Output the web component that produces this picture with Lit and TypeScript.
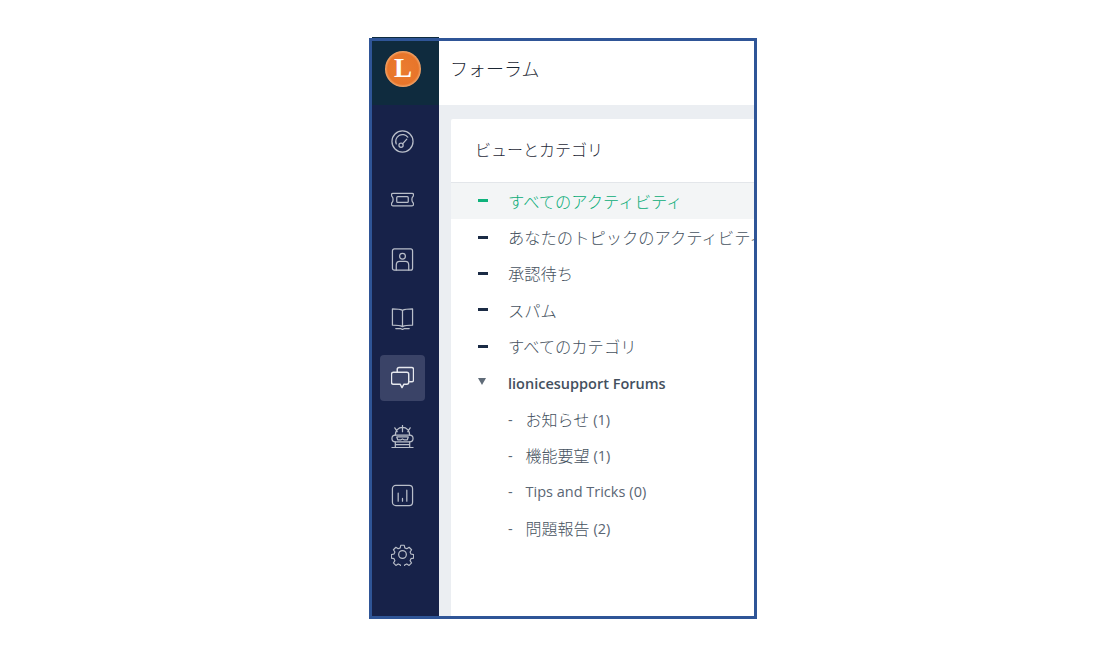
import { LitElement, css, html, svg } from 'lit';
import { customElement } from 'lit/decorators.js';

const ICONS = [
  svg`<circle cx="12" cy="12" r="11"/><path d="M5.500 14.500A7 7 0 0 1 17.500 7.500"/><circle cx="10.500" cy="16" r="2.200"/><path d="M12 14.500l4.500-5"/>`,
  svg`<path d="M2 4.500h20c.8 0 1.500.6 1.500 1.400 0 1.100-.4 2-1 2.500-.9.9-.9 4.300 0 5.200.6.500 1 1.400 1 2.500 0 .8-.7 1.400-1.500 1.400H2c-.8 0-1.500-.6-1.500-1.400 0-1.100.4-2 1-2.500.9-.9.9-4.300 0-5.200-.6-.5-1-1.400-1-2.500 0-.8.7-1.400 1.500-1.400z"/><rect x="6" y="8" width="12" height="6" rx="1"/>`,
  svg`<rect x="1.500" y="1" width="21" height="22" rx="2"/><circle cx="12" cy="8.500" r="3"/><path d="M5.500 23v-5c0-2.500 1.500-4 3.500-4h6c2 0 3.500 1.500 3.500 4v5"/>`,
  svg`<path d="M12 3.500C10 2.500 7 2 1.500 2v17c5.500 0 8.500.5 10.500 1.500 2-1 5-1.500 10.500-1.500V2C17 2 14 2.500 12 3.500zM12 3.500v17M5 22.500h5l2 1 2-1h5"/>`,
  svg`<path d="M6.500 6.500V3.500C6.500 2.400 7.400 1.500 8.500 1.500h13c1.100 0 2 .9 2 2v11c0 1.100-.9 2-2 2h-2"/><path d="M2.500 6.500h14c1.100 0 2 .9 2 2v8.500c0 1.100-.9 2-2 2h-3l-2 3.500-2-3.500h-7c-1.100 0-2-.9-2-2V8.500c0-1.100.9-2 2-2z"/>`,
  svg`<path d="M4.500 10.500C4.500 6 7.500 2.500 12 2.500s7.500 3.500 7.500 8M12 .5V7M4 3l2.500 4M20 3l-2.500 4"/><path d="M1 14c0-2 1.300-3.500 3.500-3.500h15c2.200 0 3.500 1.500 3.500 3.500s-1.300 3.500-3.500 3.500h-15C2.300 17.500 1 16 1 14z"/><path d="M6 12.500h12l-1 3h-3.500l-1.500-1-1.500 1H7zM4.500 17.500V23M19.500 17.500V23M1 23.500h22M4.500 20.500h15"/>`,
  svg`<rect x="1.500" y="1.500" width="21" height="21" rx="3.500"/><path d="M7.500 9.500V18M12 15v3M16.500 6.500V18"/>`,
  svg`<circle cx="12" cy="12" r="4"/><path d="M10 1.500h4l.6 3 2.300 1 2.600-1.700 2.800 2.800-1.700 2.600 1 2.300 3 .6v4l-3 .6-1 2.300 1.700 2.600-2.800 2.800-2.600-1.700-2.300 1-.6 3h-4l-.6-3-2.300-1-2.600 1.700-2.800-2.800 1.700-2.600-1-2.300-3-.6v-4l3-.6 1-2.300-1.700-2.600 2.800-2.800 2.600 1.700 2.300-1z" transform="translate(12 12) scale(.92) translate(-12 -12)"/>`,
];

const VIEWS = [
  'すべてのアクティビティ',
  'あなたのトピックのアクティビティ',
  '承認待ち',
  'スパム',
  'すべてのカテゴリ',
];

const FORUMS = [
  { name: 'お知らせ', count: 1, ja: true },
  { name: '機能要望', count: 1, ja: true },
  { name: 'Tips and Tricks', count: 0, ja: false },
  { name: '問題報告', count: 2, ja: true },
];

@customElement('app-root')
export class AppRoot extends LitElement {
  static styles = css`
    :host {
      display: block;
      background: #fff;
      height: 671px;
      padding: 37px 0 0 369px;
      box-sizing: border-box;
      font-family: 'Open Sans', 'Noto Sans CJK JP', sans-serif;
    }

    .strip {
      width: 67px;
      height: 1px;
      margin-left: 3px;
      background: #0f2b3e;
    }

    .frame {
      display: flex;
      width: 388px;
      height: 581px;
      box-sizing: border-box;
      border: 3px solid #2f5597;
      overflow: hidden;
    }

    .sidebar {
      flex: 0 0 67px;
      background: #172249;
      display: flex;
      flex-direction: column;
    }

    .brand {
      height: 64px;
      box-sizing: border-box;
      padding: 0 5px 8px 0;
      background: #0f2b3e;
      display: flex;
      align-items: center;
      justify-content: center;
      margin-bottom: 7px;
    }

    .logo {
      width: 36px;
      height: 36px;
      border-radius: 50%;
      background: radial-gradient(circle, #ea7c30 0%, #e8752a 60%, #f2a468 70%, #e8772c 78%, #e36a22 100%);
      color: #fff;
      font: 700 27px/35px 'Liberation Serif', serif;
      text-align: center;
    }

    .nav {
      height: 59px;
      padding-right: 6px;
      display: flex;
      align-items: center;
      justify-content: center;
    }

    .nav span {
      width: 45px;
      height: 46px;
      border-radius: 4px;
      display: flex;
      align-items: center;
      justify-content: center;
    }

    .nav.active span {
      background: #3a4367;
    }

    .nav svg {
      width: 23px;
      height: 23px;
      fill: none;
      stroke: #b9bec9;
      stroke-width: 1.300;
      stroke-linecap: round;
      stroke-linejoin: round;
    }

    .nav.active svg {
      stroke: #e6e8ee;
      stroke-width: 1.500;
    }

    .main {
      flex: 1;
      min-width: 0;
      display: flex;
      flex-direction: column;
      background: #ebeef2;
    }

    .topbar {
      flex: 0 0 64px;
      box-sizing: border-box;
      padding: 0 0 10px 11px;
      background: #fff;
      display: flex;
      align-items: center;
      font-size: 18px;
      font-weight: 300;
      color: #1b2633;
    }

    .content {
      flex: 1;
      margin: 14px 0 0 12px;
      background: #fff;
      border-radius: 2px 0 0 0;
      min-height: 0;
    }

    .card-title {
      height: 64px;
      box-sizing: border-box;
      padding: 0 0 4px 24px;
      border-bottom: 1px solid #e3e6ea;
      display: flex;
      align-items: center;
      font-size: 16px;
      font-weight: 300;
      color: #1f2a38;
    }

    .row {
      height: 36.4px;
      box-sizing: border-box;
      padding-bottom: 1px;
      display: flex;
      align-items: center;
      white-space: nowrap;
      overflow: hidden;
      font-size: 16.300px;
      font-weight: 300;
      color: #465260;
    }

    .row .mark {
      flex: 0 0 57px;
      box-sizing: border-box;
      padding-left: 27px;
    }

    .dash {
      display: block;
      width: 10px;
      height: 3px;
      background: #1b2b45;
    }

    .row.selected {
      background: #f3f5f6;
      color: #09ac76;
    }

    .row.selected .dash {
      background: #0fb27c;
    }

    .caret {
      display: block;
      width: 0;
      height: 0;
      border-left: 4.500px solid transparent;
      border-right: 4.500px solid transparent;
      border-top: 7px solid #5f6b78;
      margin-top: -3px;
    }

    .row.group {
      padding-bottom: 0;
      font-size: 14.500px;
      font-weight: 600;
      color: #44505e;
    }

    .row.child {
      font-size: 14.500px;
      padding-left: 57px;
      font-weight: 400;
      color: #5a6674;
    }

    .child .tick {
      flex: 0 0 17.500px;
    }

    .child .name {
      margin-right: 4px;
    }

    .child .ja {
      font-size: 16px;
      font-weight: 300;
      color: #465260;
    }
  `;

  render() {
    return html`
      <div class="strip"></div>
      <div class="frame">
        <aside class="sidebar">
          <div class="brand"><div class="logo">L</div></div>
          ${ICONS.map(
            (icon, i) => html`
              <div class="nav ${i === 4 ? 'active' : ''}">
                <span><svg viewBox="0 0 24 24">${icon}</svg></span>
              </div>
            `,
          )}
        </aside>
        <div class="main">
          <header class="topbar">フォーラム</header>
          <section class="content">
            <div class="card-title">ビューとカテゴリ</div>
            ${VIEWS.map(
              (view, i) => html`
                <div class="row ${i === 0 ? 'selected' : ''}">
                  <span class="mark"><i class="dash"></i></span>${view}
                </div>
              `,
            )}
            <div class="row group">
              <span class="mark"><i class="caret"></i></span>lionicesupport Forums
            </div>
            ${FORUMS.map(
              (f) => html`
                <div class="row child">
                  <span class="tick">-</span>
                  <span class="name ${f.ja ? 'ja' : ''}">${f.name}</span>
                  <span>(${f.count})</span>
                </div>
              `,
            )}
          </section>
        </div>
      </div>
    `;
  }
}
